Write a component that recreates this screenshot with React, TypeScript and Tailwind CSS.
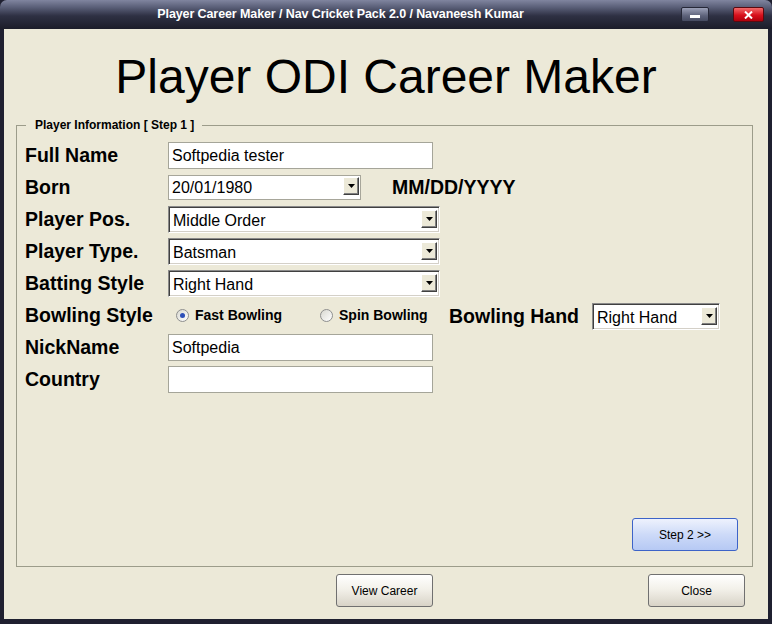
import { ReactNode } from "react";

const sans = "font-['Liberation_Sans',Arial,sans-serif]";

const DropButton = () => (
  <span className="w-[16px] h-[18px] shrink-0 flex items-center justify-center bg-[#ece9d8] border border-t-white border-l-white border-r-[#404040] border-b-[#404040] shadow-[inset_-1px_-1px_0_#808080]">
    <svg width="7" height="4" viewBox="0 0 7 4">
      <path d="M0 0h7L3.5 4z" fill="#000" />
    </svg>
  </span>
);

const TextBox = ({ value = "" }: { value?: string }) => (
  <div className="w-[265px] h-[27px] bg-white border border-[#a5a599] flex items-center pl-[3px] pt-[1px] text-[16px] text-black">
    {value}
  </div>
);

const Combo = ({
  value,
  width,
  flat = false,
}: {
  value: string;
  width: string;
  flat?: boolean;
}) =>
  flat ? (
    <div className={`${width} h-[25px] bg-white border border-[#a7a69a] flex items-start justify-between pl-[3px] pr-[1px] pt-[1px] text-[16px]`}>
      <span className="leading-[22px]">{value}</span>
      <DropButton />
    </div>
  ) : (
    <div className={`${width} h-[27px] bg-white border border-t-[#8a8a8a] border-l-[#8a8a8a] border-r-white border-b-white shadow-[inset_1px_1px_0_#404040,inset_-1px_-1px_0_#d4d0c8] flex items-center justify-between pl-[4px] pr-[2px] text-[16px]`}>
      <span className="pt-[3px]">{value}</span>
      <DropButton />
    </div>
  );

const Radio = ({ checked, label }: { checked?: boolean; label: string }) => (
  <div className="flex items-center gap-[6px]">
    <span className="w-[13px] h-[13px] rounded-full border border-[#8e8f8f] bg-[linear-gradient(135deg,#d8d8d0,#ffffff)] flex items-center justify-center">
      {checked && <span className="w-[5px] h-[5px] rounded-full bg-[#2c4fb8]" />}
    </span>
    <span className="text-[14px] font-bold">{label}</span>
  </div>
);

const Row = ({ label, children }: { label: string; children: ReactNode }) => (
  <div className="h-[32px] flex items-center">
    <div className="w-[143px] shrink-0 pt-[2px] text-[19.5px] font-bold leading-none">{label}</div>
    {children}
  </div>
);

const WinButton = ({ children, className = "" }: { children: ReactNode; className?: string }) => (
  <button
    className={`h-[33px] rounded-[3px] border border-[#707070] bg-[linear-gradient(to_bottom,#ffffff,#f3f1ea_45%,#d8d3c7)] text-[12px] text-black ${className}`}
  >
    {children}
  </button>
);

export default function App() {
  return (
    <div className={`w-[772px] h-[624px] flex flex-col bg-[#1f2030] overflow-hidden ${sans}`}>
      {/* title bar */}
      <div className="h-[29px] shrink-0 flex items-center rounded-t-[7px] bg-[linear-gradient(to_bottom,#80859f_0%,#5a5f78_25%,#2e3043_55%,#1c1d29_100%)]">
        <div className="flex-1 text-center text-white font-bold text-[12.5px] tracking-[-0.1px]">
          Player Career Maker / Nav Cricket Pack 2.0 / Navaneesh Kumar
        </div>
        <div className="w-[28px] h-[15px] rounded-[2px] border border-[#262838] bg-[linear-gradient(to_bottom,#9ca1b8,#5d627a_60%,#454a60)] flex items-end justify-center pb-[3px]">
          <span className="w-[10px] h-[3px] bg-white" />
        </div>
        <div className="w-[31px] h-[15px] ml-[24px] mr-[8px] rounded-[2px] border border-[#5a0a10] bg-[linear-gradient(to_bottom,#f26a6a,#d8101c_55%,#b0000c)] flex items-center justify-center">
          <svg width="9" height="8" viewBox="0 0 9 8">
            <path d="M1 0.5l7 7M8 0.5l-7 7" stroke="#fff" strokeWidth="2" />
          </svg>
        </div>
      </div>

      {/* client area */}
      <div className="flex-1 mx-[4px] mb-[5px] bg-[#ece9d8] flex flex-col text-black">
        <div className="mt-[24px] h-[48px] text-center text-[48px] leading-[48px]">
          Player ODI Career Maker
        </div>

        <fieldset className="mt-[18px] ml-[12px] mr-[15px] h-[448px] border border-[#9c9c8a] pl-[8px] pr-[14px] pt-[7px]">
          <legend className="ml-[1px] pl-[9px] pr-[8px] text-[12px] leading-[13px] font-bold">
            Player Information [ Step 1 ]
          </legend>

          <Row label="Full Name">
            <TextBox value="Softpedia tester" />
          </Row>
          <Row label="Born">
            <Combo value="20/01/1980" width="w-[193px]" flat />
            <span className="ml-[31px] pt-[2px] text-[19.5px] font-bold">MM/DD/YYYY</span>
          </Row>
          <Row label="Player Pos.">
            <Combo value="Middle Order" width="w-[272px]" />
          </Row>
          <Row label="Player Type.">
            <Combo value="Batsman" width="w-[272px]" />
          </Row>
          <Row label="Batting Style">
            <Combo value="Right Hand" width="w-[272px]" />
          </Row>
          <Row label="Bowling Style">
            <div className="w-[144px] ml-[8px] flex">
              <Radio checked label="Fast Bowling" />
            </div>
            <div className="w-[129px] flex">
              <Radio label="Spin Bowling" />
            </div>
            <div className="w-[143px] text-[19.5px] font-bold mt-[3px]">Bowling Hand</div>
            <div className="mt-[2px]">
              <Combo value="Right Hand" width="w-[128px]" />
            </div>
          </Row>
          <Row label="NickName">
            <TextBox value="Softpedia" />
          </Row>
          <Row label="Country">
            <TextBox />
          </Row>

          <div className="mt-[123px] flex justify-end">
            <button className="w-[106px] h-[33px] rounded-[3px] border border-[#3d63c8] bg-[linear-gradient(to_bottom,#eef2fd,#cddaf8_50%,#b6c9f4)] text-[12px]">
              Step 2 &gt;&gt;
            </button>
          </div>
        </fieldset>

        <div className="mt-[7px] flex pl-[332px] pr-[23px]">
          <WinButton className="w-[97px]">View Career</WinButton>
          <WinButton className="w-[97px] ml-auto">Close</WinButton>
        </div>
      </div>
    </div>
  );
}
